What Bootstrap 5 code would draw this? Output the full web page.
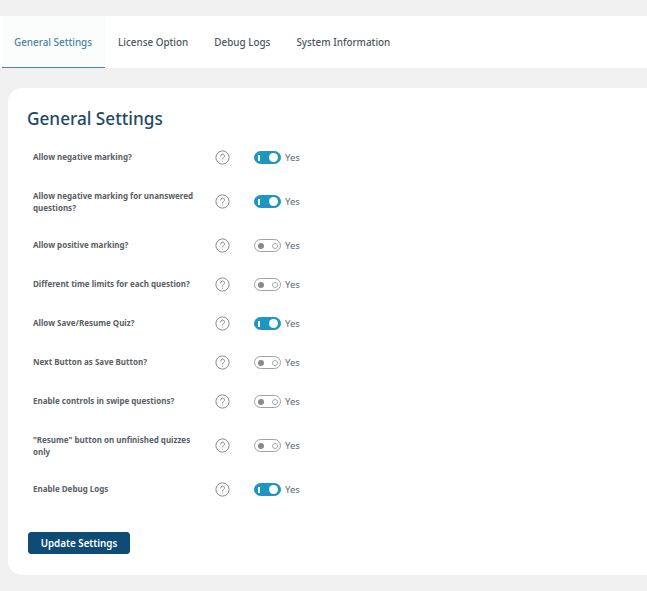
<!DOCTYPE html>
<html lang="en"><head><meta charset="utf-8"><title>General Settings</title>
<link href="https://cdn.jsdelivr.net/npm/bootstrap@5.3.0/dist/css/bootstrap.min.css" rel="stylesheet">
<style>
html,body{height:100%;overflow:hidden}
body{background:#f0f0f1;font-family:"Noto Sans","Open Sans",sans-serif;color:#3c434a;padding-top:16px}
.tabbar{background:#fff;height:52px;padding-left:2px}
.tabbar .nav-link{height:52px;padding:0 13px 0 12px;font-size:9.9px;font-weight:500;color:#50575e;line-height:52px;border-radius:0;border-bottom:1px solid transparent}
.tabbar .nav-link.active{color:#4a87a3;border-bottom-color:#4a87a3;background:#fbfcfc}
.tabbar .nav-item+.nav-item .nav-link{padding:0 13px}
.panel{background:#fff;margin:20px -20px 0 8px;height:487px;border-radius:14px;padding:19px 19px}
.panel-title{font-size:17.2px;font-weight:500;color:#1d4a66;line-height:24px;margin:0 0 7px}
.opt{display:grid;grid-template-columns:181px 40px 31px auto;justify-content:start;align-items:center;padding-left:6px;min-height:39px}
.opt.tall{min-height:49px}
.opt-label{font-size:8px;font-weight:700;color:#5a6066;line-height:12px;padding:0 14px 1px 0}
.opt.tall .opt-label{padding-bottom:0}
.qmark{width:15px;height:15px;display:block;margin-left:1px}
.sw{width:27px;height:13px;border-radius:7px;display:flex;align-items:center;justify-content:space-between;padding:0 2px 0 3px;border:1px solid #a0a2a5;background:#fff}
.sw.on{background:#1e97c0;border-color:#1e97c0}
.dot{width:6px;height:6px;border-radius:50%;background:#8a8a8a}
.ring{width:6px;height:6px;border-radius:50%;border:1px solid #aaa}
.sw.on .bar{width:1.5px;height:6px;background:#fff}
.sw.on .knob{width:9px;height:9px;border-radius:50%;background:#fff}
.yes{font-size:9.6px;color:#646970;padding-top:1px}
.save{background:#0f4c75;border:1px solid #0f4c75;color:#fff;font-size:9.8px;font-weight:600;padding:2px 0 0;width:102px;height:22px;border-radius:3px;margin:23px 0 0 1px;display:block}
.save:hover{background:#0f4c75;color:#fff}
</style></head><body>
<div class="tabbar"><ul class="nav">
<li class="nav-item"><a class="nav-link active" href="#">General Settings</a></li>
<li class="nav-item"><a class="nav-link" href="#">License Option</a></li>
<li class="nav-item"><a class="nav-link" href="#">Debug Logs</a></li>
<li class="nav-item"><a class="nav-link" href="#">System Information</a></li>
</ul></div>
<div class="panel">
<h2 class="panel-title">General Settings</h2>
<div id="opts"></div>
<button class="btn save" type="button">Update Settings</button>
</div>
<script>
const q='<svg class="qmark" viewBox="0 0 15 15" fill="none"><circle cx="7.5" cy="7.5" r="6.6" stroke="#8a8a8a" stroke-width="1"/><path d="M5.7 6a1.9 1.9 0 1 1 2.8 1.6c-.7.4-1 .8-1 1.5" stroke="#8a8a8a" stroke-width="1" stroke-linecap="round"/><circle cx="7.5" cy="11" r=".6" fill="#8a8a8a"/></svg>';
const rows=[["Allow negative marking?",1],["Allow negative marking for unanswered questions?",1,1],["Allow positive marking?",0],["Different time limits for each question?",0],["Allow Save/Resume Quiz?",1],["Next Button as Save Button?",0],["Enable controls in swipe questions?",0],["\"Resume\" button on unfinished quizzes only",0,1],["Enable Debug Logs",1]];
document.getElementById('opts').innerHTML=rows.map(r=>`<div class="opt${r[2]?' tall':''}"><div class="opt-label">${r[0]}</div><div>${q}</div><div class="sw${r[1]?' on':''}">${r[1]?'<span class="bar"></span><span class="knob"></span>':'<span class="dot"></span><span class="ring"></span>'}</div><div class="yes">Yes</div></div>`).join('');
</script>
<script src="https://cdn.jsdelivr.net/npm/bootstrap@5.3.0/dist/js/bootstrap.bundle.min.js"></script>
</body></html>
